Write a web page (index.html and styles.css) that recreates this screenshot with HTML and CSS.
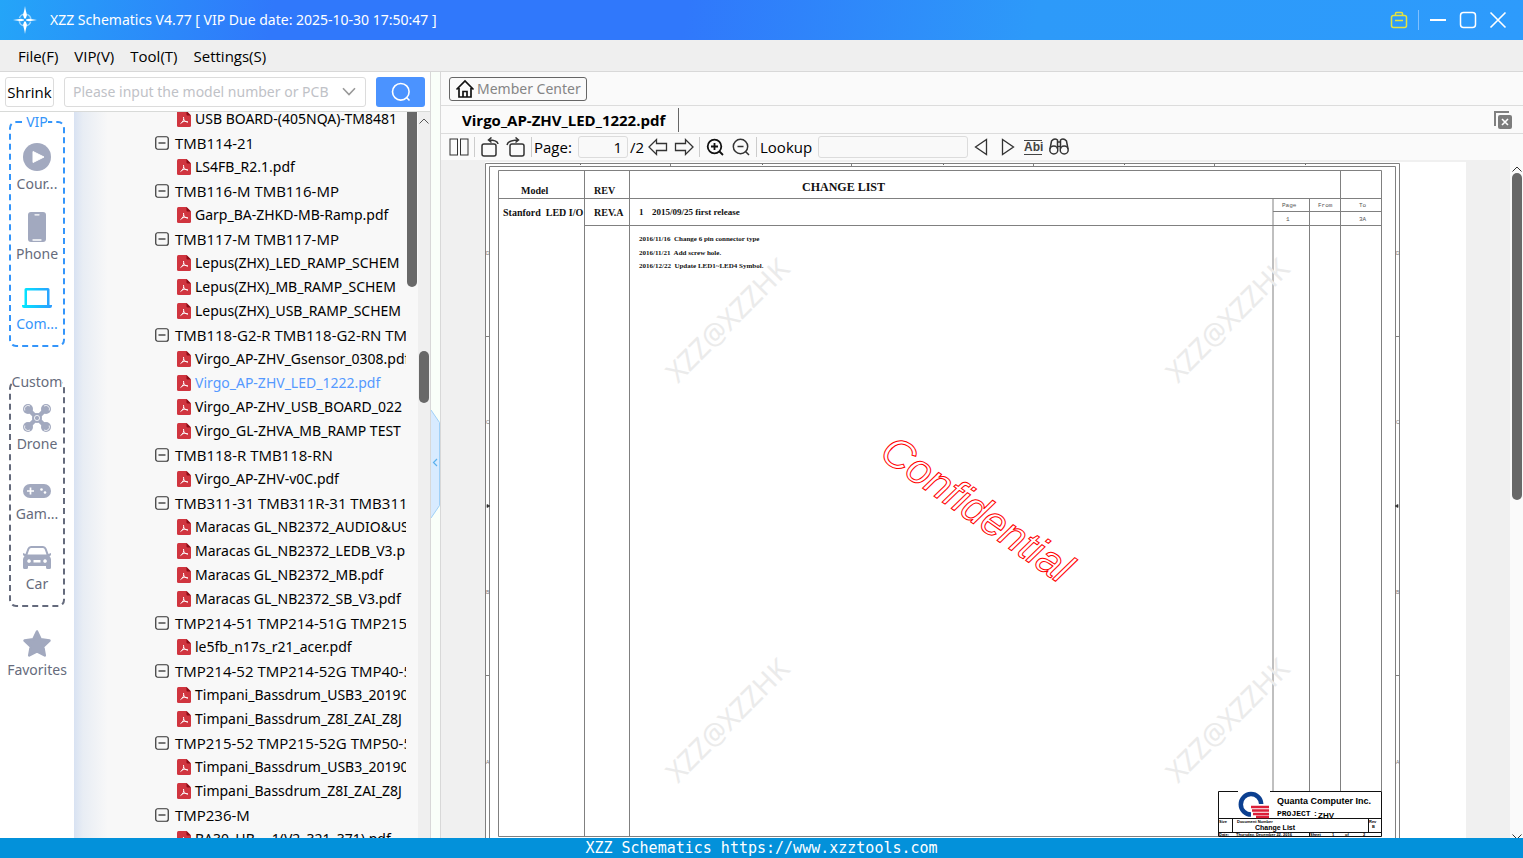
FILE: index.html
```html
<!DOCTYPE html>
<html lang="en">
<head>
<meta charset="utf-8">
<title>XZZ Schematics</title>
<link rel="stylesheet" href="styles.css">
</head>
<body>
<svg class="defs" aria-hidden="true">
  <defs>
    <linearGradient id="teal" x1="0" x2="1" y1="0" y2="0"><stop offset="0" stop-color="#00eaff"/><stop offset="1" stop-color="#2d9bff"/></linearGradient>
    <symbol id="pdf" viewBox="0 0 14 16">
      <path d="M1.500 0H9.500L14 4.500V14.500Q14 16 12.500 16H1.500Q0 16 0 14.500V1.500Q0 0 1.500 0Z" fill="#d0353f"/>
      <path d="M9.500 0L14 4.500H10.500Q9.500 4.500 9.500 3.500Z" fill="#8d0d17"/>
      <path d="M6.500 6C7.300 8.500 6 11 3.500 12.600M6.700 8.200C7.500 10 9 11 11 11.100M5 11.100C6.500 10.300 8.500 10.100 10.800 10.900" fill="none" stroke="#fff" stroke-width="1"/>
    </symbol>
    <symbol id="minus" viewBox="0 0 14 14">
      <rect x=".75" y=".75" width="12.500" height="12.500" rx="2" fill="none" stroke="#333" stroke-width="1.200"/>
      <path d="M3.500 7H10.500" stroke="#222" stroke-width="1.200"/>
    </symbol>
  </defs>
</svg>

<header class="titlebar">
  <svg class="logo" width="26" height="30" viewBox="0 0 26 30">
    <circle cx="13" cy="15" r="6" fill="none" stroke="#c4e8ff" stroke-width="1.300" stroke-dasharray="6 3.400" stroke-dashoffset="-1.700" opacity=".75"/>
    <path d="M13 1C13.500 5 14.500 8 15 10L13.800 13.500H12.200L11 10C11.500 8 12.500 5 13 1ZM13 29C13.500 25 14.500 22 15 20L13.800 16.500H12.200L11 20C11.500 22 12.500 25 13 29ZM1 15L9 13.800L12 14.400V15.600L9 16.200ZM25 15L17 13.800L14 14.400V15.600L17 16.200Z" fill="#fff"/>
  </svg>
  <h1>XZZ Schematics V4.77 [ VIP Due date: 2025-10-30 17:50:47 ]</h1>
  <div class="window-buttons">
    <button aria-label="Toolbox"><svg width="18" height="18" viewBox="0 0 18 18" fill="none" stroke="#e6e33c" stroke-width="1.500"><rect x="1.500" y="4.500" width="15" height="12" rx="2"/><path d="M5.500 4.500V2.500Q5.500 1.500 6.500 1.500H11.500Q12.500 1.500 12.500 2.500V4.500M5 9.500H13"/></svg></button>
    <span class="split"></span>
    <button aria-label="Minimize"><svg width="18" height="18" viewBox="0 0 18 18" stroke="#fff" stroke-width="2"><path d="M1 9H17"/></svg></button>
    <button aria-label="Maximize"><svg width="18" height="18" viewBox="0 0 18 18" fill="none" stroke="#fff" stroke-width="1.500"><rect x="1.500" y="1.500" width="15" height="15" rx="3"/></svg></button>
    <button aria-label="Close"><svg width="18" height="18" viewBox="0 0 18 18" stroke="#fff" stroke-width="1.600"><path d="M1.500 1.500L16.500 16.500M16.500 1.500L1.500 16.500"/></svg></button>
  </div>
</header>

<nav class="menubar">
  <button>File(F)</button><button>VIP(V)</button><button>Tool(T)</button><button>Settings(S)</button>
</nav>

<main class="workspace">
  <section class="left">
    <form class="search">
      <button type="button" class="shrink">Shrink</button>
      <div class="combo">
        <input type="text" aria-label="Model number" placeholder="Please input the model number or PCB">
        <svg width="14" height="9" viewBox="0 0 14 9" fill="none" stroke="#999" stroke-width="1.600"><path d="M1 1.200L7 7.500L13 1.200"/></svg>
      </div>
      <button type="button" class="go" aria-label="Search"><svg width="20" height="20" viewBox="0 0 20 20" fill="none" stroke="#fff" stroke-width="1.600"><circle cx="9.800" cy="9.800" r="8.300"/><path d="M15.500 15.500L18.500 18.500"/></svg></button>
    </form>
    <div class="browser">
      <aside class="sidebar">
        <fieldset class="group vip">
          <legend>VIP</legend>
          <button class="nav"><svg width="30" height="30" viewBox="0 0 30 30"><circle cx="15" cy="15" r="14" fill="#a2a9bf"/><path d="M11 9.500V20.500L22 15Z" fill="#fff" stroke="#fff" stroke-linejoin="round"/></svg>Cour...</button>
          <button class="nav"><svg width="30" height="30" viewBox="0 0 30 30"><rect x="6" y="0" width="18" height="30" rx="3" fill="#a2a9bf"/><path d="M13 2.800H17M11 28H19" stroke="#fff" stroke-width="1.300" stroke-linecap="round"/></svg>Phone</button>
          <button class="nav active"><svg width="30" height="30" viewBox="0 0 30 30"><path fill-rule="evenodd" fill="url(#teal)" d="M4 6H26Q27.500 6 27.500 7.500V23H30V24Q30 26 28 26H2Q0 26 0 24V23H2.500V7.500Q2.500 6 4 6ZM5 8.500V23H25V8.500Z"/></svg>Com...</button>
        </fieldset>
        <fieldset class="group">
          <legend>Custom</legend>
          <button class="nav"><svg width="30" height="30" viewBox="0 0 30 30"><path d="M6 7L24 25M24 7L6 25" stroke="#a2a9bf" stroke-width="4.500"/><g fill="#a2a9bf"><circle cx="6" cy="7" r="5"/><circle cx="24" cy="7" r="5"/><circle cx="6" cy="25" r="5"/><circle cx="24" cy="25" r="5"/><circle cx="15" cy="16" r="5"/></g><g fill="none" stroke="#fff" stroke-width=".8"><path d="M2.800 8.500A3.600 3.600 0 0 1 8 4M27.200 8.500A3.600 3.600 0 0 0 22 4M2.800 23.500A3.600 3.600 0 0 0 8 28M27.200 23.500A3.600 3.600 0 0 1 22 28"/><circle cx="15" cy="16" r="2.600"/></g></svg>Drone</button>
          <button class="nav"><svg width="30" height="30" viewBox="0 0 30 30"><rect x="1" y="12" width="28" height="14" rx="7" fill="#a2a9bf"/><path d="M5 19H12M8.500 15.500V22.500" stroke="#fff" stroke-width="1.700"/><circle cx="19.500" cy="17.500" r="1.300" fill="#fff"/><circle cx="23" cy="20.500" r="1.300" fill="#fff"/></svg>Gam...</button>
          <button class="nav"><svg width="30" height="30" viewBox="0 0 30 30"><path transform="translate(0 1)" fill-rule="evenodd" fill="#a2a9bf" d="M9 3H21Q23.500 3 24.500 5.500L26.500 11L29 10V12L27.500 13.500Q29 14.500 29 16.500V24.500Q29 26 27.500 26H25.500Q24 26 24 24.500V23H6V24.500Q6 26 4.500 26H2.500Q1 26 1 24.500V16.500Q1 14.500 2.500 13.500L1 12V10L3.500 11L5.500 5.500Q6.500 3 9 3ZM9 5Q7.700 5 7.200 6.500L5.500 11.500H24.500L22.800 6.500Q22.300 5 21 5ZM7 16.200A1.800 1.800 0 1 0 7.100 16.200ZM23 16.200A1.800 1.800 0 1 0 23.100 16.200ZM11.500 17V19.500H18.500V17Z"/></svg>Car</button>
        </fieldset>
        <button class="nav favorites"><svg width="30" height="30" viewBox="0 0 30 30"><path d="M15 3.500L18.700 11.300L27.500 12.500L21.200 18.500L22.800 27.500L15 23.500L7.200 27.500L8.800 18.500L2.500 12.500L11.300 11.300Z" fill="#a2a9bf" stroke="#a2a9bf" stroke-width="2.500" stroke-linejoin="round"/></svg>Favorites</button>
      </aside>
      <div class="tree">
        <ul>
          <li class="file"><svg><use href="#pdf"/></svg>USB BOARD-(405NQA)-TM8481</li>
          <li><svg><use href="#minus"/></svg>TMB114-21</li>
          <li class="file"><svg><use href="#pdf"/></svg>LS4FB_R2.1.pdf</li>
          <li><svg><use href="#minus"/></svg>TMB116-M TMB116-MP</li>
          <li class="file"><svg><use href="#pdf"/></svg>Garp_BA-ZHKD-MB-Ramp.pdf</li>
          <li><svg><use href="#minus"/></svg>TMB117-M TMB117-MP</li>
          <li class="file"><svg><use href="#pdf"/></svg>Lepus(ZHX)_LED_RAMP_SCHEM</li>
          <li class="file"><svg><use href="#pdf"/></svg>Lepus(ZHX)_MB_RAMP_SCHEM</li>
          <li class="file"><svg><use href="#pdf"/></svg>Lepus(ZHX)_USB_RAMP_SCHEM</li>
          <li><svg><use href="#minus"/></svg>TMB118-G2-R TMB118-G2-RN TMB</li>
          <li class="file"><svg><use href="#pdf"/></svg>Virgo_AP-ZHV_Gsensor_0308.pdf</li>
          <li class="file selected"><svg><use href="#pdf"/></svg>Virgo_AP-ZHV_LED_1222.pdf</li>
          <li class="file"><svg><use href="#pdf"/></svg>Virgo_AP-ZHV_USB_BOARD_022</li>
          <li class="file"><svg><use href="#pdf"/></svg>Virgo_GL-ZHVA_MB_RAMP TEST</li>
          <li><svg><use href="#minus"/></svg>TMB118-R TMB118-RN</li>
          <li class="file"><svg><use href="#pdf"/></svg>Virgo_AP-ZHV-v0C.pdf</li>
          <li><svg><use href="#minus"/></svg>TMB311-31 TMB311R-31 TMB311R</li>
          <li class="file"><svg><use href="#pdf"/></svg>Maracas GL_NB2372_AUDIO&amp;US</li>
          <li class="file"><svg><use href="#pdf"/></svg>Maracas GL_NB2372_LEDB_V3.p</li>
          <li class="file"><svg><use href="#pdf"/></svg>Maracas GL_NB2372_MB.pdf</li>
          <li class="file"><svg><use href="#pdf"/></svg>Maracas GL_NB2372_SB_V3.pdf</li>
          <li><svg><use href="#minus"/></svg>TMP214-51 TMP214-51G TMP215-</li>
          <li class="file"><svg><use href="#pdf"/></svg>le5fb_n17s_r21_acer.pdf</li>
          <li><svg><use href="#minus"/></svg>TMP214-52 TMP214-52G TMP40-5</li>
          <li class="file"><svg><use href="#pdf"/></svg>Timpani_Bassdrum_USB3_20190</li>
          <li class="file"><svg><use href="#pdf"/></svg>Timpani_Bassdrum_Z8I_ZAI_Z8J</li>
          <li><svg><use href="#minus"/></svg>TMP215-52 TMP215-52G TMP50-5</li>
          <li class="file"><svg><use href="#pdf"/></svg>Timpani_Bassdrum_USB3_20190</li>
          <li class="file"><svg><use href="#pdf"/></svg>Timpani_Bassdrum_Z8I_ZAI_Z8J</li>
          <li><svg><use href="#minus"/></svg>TMP236-M</li>
          <li class="file"><svg><use href="#pdf"/></svg>BA30_HB-__1(V2_321_371).pdf</li>
        </ul>
      </div>
      <div class="inner-scroll"></div>
      <div class="outer-scroll"><svg width="10" height="6" viewBox="0 0 10 6" fill="none" stroke="#555"><path d="M.5 5.500L5 1L9.500 5.500"/></svg><div class="thumb"></div></div>
    </div>
  </section>

  <div class="splitter"><button aria-label="Collapse panel"><svg width="10" height="110" viewBox="0 0 10 110"><path d="M0 1L8.500 13.500V96.500L0 109" fill="#d8ebff" stroke="#9fd0f7"/><path d="M6 50L2.500 53.500L6 57" fill="none" stroke="#5bb1ee" stroke-width="1.200"/></svg></button></div>

  <section class="right">
    <div class="member"><button><svg width="20" height="20" viewBox="0 0 20 20" fill="none" stroke="#111" stroke-width="1.700"><path d="M1.500 10.500L10 2L18.500 10.500M4 9V18H16V9M8 18V12.500H12V18"/></svg>Member Center</button></div>
    <div class="tabs"><button class="tab">Virgo_AP-ZHV_LED_1222.pdf</button><button class="close-all" aria-label="Close all tabs"><svg width="18" height="18" viewBox="0 0 18 18"><path d="M1 15V1H15" fill="none" stroke="#808080" stroke-width="2"/><rect x="4" y="4" width="14" height="14" rx="2" fill="#7c7c7c"/><path d="M8 8L14 14M14 8L8 14" stroke="#fff" stroke-width="1.600"/></svg></button></div>
    <div class="toolbar">
      <button aria-label="Two pages"><svg width="20" height="20" viewBox="0 0 20 20"><rect x="1" y="2" width="7.500" height="16"/><rect x="11.500" y="2" width="7.500" height="16"/></svg></button>
      <i></i>
      <button aria-label="Rotate left"><svg width="20" height="20" viewBox="0 0 20 20" stroke-width="1.500"><rect x="2" y="7" width="14" height="12" rx="2"/><path d="M18 7Q17.500 3 8.500 3M11.500 .5L8.500 3L11.500 5.500"/></svg></button>
      <button aria-label="Rotate right"><svg width="20" height="20" viewBox="0 0 20 20" stroke-width="1.500"><rect x="4" y="7" width="14" height="12" rx="2"/><path d="M1 8Q2 3 12.500 3M9.500 .5L12.500 3L9.500 5.500"/></svg></button>
      <i></i>
      <label class="page-label" for="page">Page:</label><input id="page" type="text" value="1"><span class="total">/2</span>
      <button aria-label="Previous page"><svg width="20" height="20" viewBox="0 0 20 20" stroke-width="1.300"><path d="M1 10L8.500 2.500V6.500H18.500V13.500H8.500V17.500Z"/></svg></button>
      <button aria-label="Next page"><svg width="20" height="20" viewBox="0 0 20 20" stroke-width="1.300"><path d="M19 10L11.500 2.500V6.500H1.500V13.500H11.500V17.500Z"/></svg></button>
      <i></i>
      <button aria-label="Zoom in"><svg class="strong" width="20" height="20" viewBox="0 0 20 20" stroke-width="1.800"><circle cx="9.500" cy="9.500" r="6.800"/><path d="M14.500 14.500L18 18M6 9.500H13M9.500 6V13"/></svg></button>
      <button aria-label="Zoom out"><svg width="20" height="20" viewBox="0 0 20 20" stroke-width="1.500"><circle cx="9.500" cy="9.500" r="7.200"/><path d="M14.500 14.500L18 18M6.500 9.500H12.500"/></svg></button>
      <i></i>
      <label class="lookup-label" for="lookup">Lookup</label><input id="lookup" type="text">
      <button aria-label="Find previous"><svg width="20" height="20" viewBox="0 0 20 20" stroke-width="1.300"><path d="M15.500 2.500V17.500L4.500 10Z"/></svg></button>
      <button aria-label="Find next"><svg width="20" height="20" viewBox="0 0 20 20" stroke-width="1.300"><path d="M5.500 2.500V17.500L16.500 10Z"/></svg></button>
      <button class="abi">Abi</button>
      <button aria-label="Find"><svg width="20" height="20" viewBox="0 0 20 20" stroke-width="1.500"><circle cx="4.800" cy="13" r="4"/><circle cx="15.200" cy="13" r="4"/><path d="M1 12L2.500 4Q5.500 .5 8.500 3V12M19 12L17.500 4Q14.500 .5 11.500 3V12M8.500 5H11.500M8.500 9.500H11.500"/></svg></button>
    </div>
    <div class="viewer">
      <div class="canvas">
      <svg class="sheet" width="981" height="676" viewBox="485 162 981 676">
        <rect x="485" y="162" width="981" height="676" fill="#fff"/>
        <g class="rules">
          <path d="M485.500 838V163.500H1399.500V838M489.500 838V166.500H1395.500V838"/>
          <path d="M498.500 836.500V170.500H1381.500V836.500ZM498.500 198.500H1381.500M584.500 225.500H1381.500M584.500 170.500V836.500M629.500 170.500V836.500M1273 198.500V791M1309.500 198.500V791M1340.500 170.500V791M1273 211.500H1381.500"/>
          <path d="M670.500 163V167M851.500 163V167M1033.500 163V167M1214.500 163V167M485 336.500H490M485 675.500H490M1395 336.500H1400M1395 675.500H1400"/>
        </g>
        <path d="M490 506L487 504.500V507.500ZM1395 506L1398 504.500V507.500ZM580 164.500h1M762 164.500h1M943 164.500h1M1124 164.500h1M1305 164.500h1" fill="#111" stroke="#444" stroke-width=".8"/>
        <g class="zone"><text x="486" y="255">D</text><text x="486" y="424">C</text><text x="486" y="594">B</text><text x="486" y="764">A</text><text x="1396" y="255">D</text><text x="1396" y="424">C</text><text x="1396" y="594">B</text><text x="1396" y="764">A</text></g>
        <g class="serif ten">
          <text x="521" y="194">Model</text><text x="594" y="194">REV</text><text x="503" y="216">Stanford  LED I/O</text><text x="594" y="216">REV.A</text>
        </g>
        <text class="serif twelve" x="802" y="191">CHANGE LIST</text>
        <g class="serif nine"><text x="639" y="215">1</text><text x="652" y="215">2015/09/25 first release</text></g>
        <g class="serif seven"><text x="639" y="241">2016/11/16  Change 6 pin connector type</text><text x="639" y="255">2016/11/21  Add screw hole.</text><text x="639" y="268">2016/12/22  Update LED1~LED4 Symbol.</text></g>
        <g class="courier"><text x="1282" y="207">Page</text><text x="1318" y="207">From</text><text x="1359" y="207">To</text><text x="1286" y="221">1</text><text x="1359" y="221">3A</text></g>
        <g class="mark">
          <text transform="translate(678 384) rotate(-45)">XZZ@XZZHK</text><text transform="translate(1178 384) rotate(-45)">XZZ@XZZHK</text>
          <text transform="translate(678 784) rotate(-45)">XZZ@XZZHK</text><text transform="translate(1178 784) rotate(-45)">XZZ@XZZHK</text>
        </g>
        <text class="confidential" transform="translate(878 457) rotate(35)">Confidential</text>
        <rect x="1218" y="791" width="164" height="46" fill="#fff"/>
        <path d="M1238 791.500H1218.500V836.500H1381.500V791.500H1270M1218.500 818.500H1381.500M1218.500 832.500H1381.500M1232.500 818.500V832.500M1368.500 818.500V832.500M1309.500 832.500V836.500" fill="none" stroke="#111"/>
        <path d="M1261.200 804A10.200 10.200 0 1 0 1251 814.500" fill="none" stroke="#0b3f90" stroke-width="4.500"/>
        <path d="M1251 807H1269M1252 810.500H1269M1253 814H1269M1256 817H1269" stroke="#dc1f38" stroke-width="2.400"/>
        <text class="quanta" x="1277" y="804">Quanta Computer Inc.</text>
        <text class="project" x="1277" y="816">PROJECT</text><text class="project" x="1313" y="816">:</text>
        <text class="small" x="1318" y="818">ZHV</text><text class="list" x="1255" y="830">Change List</text>
        <g class="tiny"><text x="1219" y="823">Size</text><text x="1237" y="823">Document Number</text><text x="1369" y="823">Rev</text><text x="1372" y="828">B</text><text x="1219" y="836">Date:</text><text x="1236" y="836">Thursday, December 22, 2016</text><text x="1310" y="836">Sheet</text><text x="1332" y="836">1</text><text x="1345" y="836">of</text><text x="1363" y="836">2</text></g>
      </svg>
      </div>
      <div class="page-scroll"><svg width="10" height="6" viewBox="0 0 10 6" fill="none" stroke="#333"><path d="M.5 5.500L5 1L9.500 5.500"/></svg><div class="thumb"></div><svg class="down" width="10" height="4" viewBox="0 0 10 4" fill="none" stroke="#333"><path d="M.5 .5L5 5L9.500 .5"/></svg></div>
    </div>
  </section>
</main>
<footer class="status">XZZ Schematics https://www.xzztools.com</footer>
</body>
</html>
```
FILE: styles.css
```css
* { box-sizing: border-box; }
body {
  margin: 0;
  height: 100vh;
  display: flex;
  flex-direction: column;
  overflow: hidden;
  background: #f0f0f0;
  color: #000;
  font: 15px/20px "Open Sans", "Noto Sans", sans-serif;
}
button {
  border: 0;
  padding: 0;
  background: none;
  color: inherit;
  font: inherit;
  white-space: nowrap;
}
input { font: inherit; min-width: 0; outline: 0; }
svg { flex: none; display: block; }
.defs { position: absolute; width: 0; height: 0; }

.titlebar h1,
.combo input,
.sidebar,
.tree .file,
.member button {
  font: 14px/20px "Noto Sans", "Open Sans", sans-serif;
}

.titlebar {
  flex: none;
  height: 40px;
  display: flex;
  align-items: center;
  padding: 0 16px 0 12px;
  background: linear-gradient(100deg, #24a5f8 0, #3078fb 18%, #3078fb 45%, #2d9af9 68%, #2d9bfc 100%);
  color: #fff;
}
.titlebar h1 { margin: 0 0 0 12px; flex: 1; }
.window-buttons { display: flex; align-items: center; gap: 12px; }
.window-buttons .split { width: 1px; height: 20px; margin: 0 -2px; background: #7fc0ff; }

.menubar {
  flex: none;
  height: 32px;
  display: flex;
  align-items: center;
  gap: 16px;
  padding: 0 18px;
  border-bottom: 1px solid #d8d8d8;
  background: #efefef;
}

.workspace { flex: 1; min-height: 0; display: flex; }
.left {
  flex: none;
  width: 431px;
  display: flex;
  flex-direction: column;
  border-right: 1px solid #d8d8d8;
  background: #fff;
}
.search {
  flex: none;
  height: 40px;
  display: flex;
  align-items: center;
  gap: 10px;
  padding: 0 5px;
  border-bottom: 1px solid #d8dad8;
}
.shrink { width: 49px; height: 30px; border: 1px solid #dcdcdc; border-radius: 3px; }
.combo {
  flex: 1;
  height: 30px;
  display: flex;
  align-items: center;
  padding: 0 9px 0 8px;
  border: 1px solid #dcdcdc;
  border-radius: 3px;
}
.combo input { flex: 1; padding: 0; border: 0; background: none; }
.combo input::placeholder { color: #bfc2c7; opacity: 1; }
.go {
  width: 49px;
  height: 30px;
  display: grid;
  place-items: center;
  border-radius: 3px;
  background: #4b93ff;
}

.browser { flex: 1; min-height: 0; display: flex; }
.sidebar { flex: none; width: 74px; padding: 0 9px; color: #666b7c; }
.group {
  height: 235px;
  min-width: 0;
  margin: 0 0 25px;
  padding: 10px 0 0;
  border: 2px dashed #646a7c;
  border-radius: 7px;
}
.group legend { margin: 0 auto; padding: 0; }
.vip { border-color: #3495fa; }
.vip legend, .active { color: #3495fa; }
.nav {
  width: 100%;
  height: 70px;
  display: flex;
  flex-direction: column;
  align-items: center;
  gap: 2px;
}
.favorites { margin-top: -4px; }

.tree {
  flex: 1;
  min-width: 0;
  overflow: hidden;
  padding-left: 81px;
  background: linear-gradient(90deg, #d8e2f2 0, #e8edf4 9px, #f8f8f8 34px);
}
.tree ul { margin: -5px 0 0; padding: 0; list-style: none; overflow: hidden; }
.tree li {
  height: 24px;
  display: flex;
  align-items: center;
  gap: 6px;
  white-space: nowrap;
}
.tree li svg { width: 14px; height: 14px; }
.tree .file { gap: 4px; padding-left: 22px; }
.tree .file svg { height: 16px; }
.tree .selected { color: #5599ff; }
.inner-scroll { width: 12px; padding-left: 1px; background: #f8f8f8; }
.inner-scroll::before {
  content: "";
  display: block;
  height: 175px;
  width: 10px;
  border-radius: 0 0 5px 5px;
  background: #686868;
}
.outer-scroll { width: 12px; padding: 6px 1px; background: #efefef; }
.outer-scroll .thumb { height: 52px; margin-top: 227px; border-radius: 5px; background: #686868; }

.splitter {
  flex: none;
  width: 10px;
  display: flex;
  align-items: center;
  border-right: 1px solid #d8d8d8;
  background: #f9fff9;
}
.splitter button { width: 9px; height: 110px; margin-top: 18px; }

.right { flex: 1; min-width: 0; display: flex; flex-direction: column; background: #fafafa; }
.member {
  flex: none;
  height: 34px;
  display: flex;
  align-items: center;
  padding: 0 8px;
  border-bottom: 1px solid #dcdcdc;
}
.member button {
  height: 24px;
  display: flex;
  align-items: center;
  gap: 2px;
  padding: 0 5px;
  border: 1px solid #666;
  border-radius: 3px;
  color: #858585;
}
.tabs {
  flex: none;
  height: 28px;
  display: flex;
  align-items: center;
  justify-content: space-between;
  padding: 0 11px 0 8px;
  border-bottom: 1px solid #dcdcdc;
}
.tab {
  height: 24px;
  padding: 0 13px;
  border-right: 1px solid #666;
  font-weight: 700;
}
.toolbar { flex: none; height: 26px; display: flex; align-items: center; padding: 0 5px; }
.toolbar button { flex: none; width: 26px; height: 26px; display: grid; place-items: center; }
.toolbar svg { fill: none; stroke: #333; }
.toolbar .strong { stroke: #111; }
.toolbar i { flex: none; width: 1px; height: 20px; margin: 0 2px; background: #ccc; }
.toolbar input {
  height: 22px;
  padding: 0 5px;
  border: 1px solid #dcdcdc;
  border-radius: 3px;
  background: #f9f9f9;
}
.page-label { width: 44px; }
#page { width: 50px; text-align: right; }
.total { width: 17px; padding-left: 2px; }
.lookup-label { width: 59px; padding-left: 1px; }
#lookup { width: 150px; }
.toolbar .abi {
  width: 18px;
  height: 15px;
  margin: 0 4px;
  border: solid #444;
  border-width: 1px 0;
  color: #444;
  font: 700 12px/13px "Liberation Sans", sans-serif;
}

.viewer { flex: 1; min-height: 0; display: flex; background: #f0f0f0; }
.canvas { flex: 1; min-width: 0; overflow: hidden; padding: 2px 0 0 44px; }
.page-scroll {
  flex: none;
  width: 13px;
  display: flex;
  flex-direction: column;
  align-items: center;
  padding-top: 6px;
  background: #fafafa;
}
.page-scroll .thumb { width: 10px; height: 327px; margin-top: 1px; border-radius: 5px; background: #686868; }
.page-scroll .down { margin-top: auto; }

.rules path { fill: none; stroke: #808080; }
.sheet text { white-space: pre; }
.zone { font: 5px "Liberation Sans", sans-serif; fill: #777; }
.serif { font-family: "Liberation Serif", serif; font-weight: 700; fill: #111; }
.ten { font-size: 10px; }
.twelve { font-size: 12px; }
.nine { font-size: 9px; }
.seven { font-size: 7px; }
.courier { font: 6px "Liberation Mono", monospace; fill: #555; }
.mark { font: 28px "Noto Sans", sans-serif; fill: #ebebeb; }
.confidential { font: italic 42px "Liberation Sans", sans-serif; fill: none; stroke: #f00; }
.quanta { font: 700 9px "Liberation Sans", sans-serif; }
.project { font: 700 8px "Liberation Mono", monospace; }
.small { font: 700 8px "Liberation Sans", sans-serif; }
.list { font: 700 7px "Liberation Sans", sans-serif; }
.tiny { font: 700 4px "Liberation Sans", sans-serif; }

.status {
  flex: none;
  height: 20px;
  background: #0391da;
  color: #fff;
  font: 15px/20px "DejaVu Sans Mono", monospace;
  text-align: center;
}
```
